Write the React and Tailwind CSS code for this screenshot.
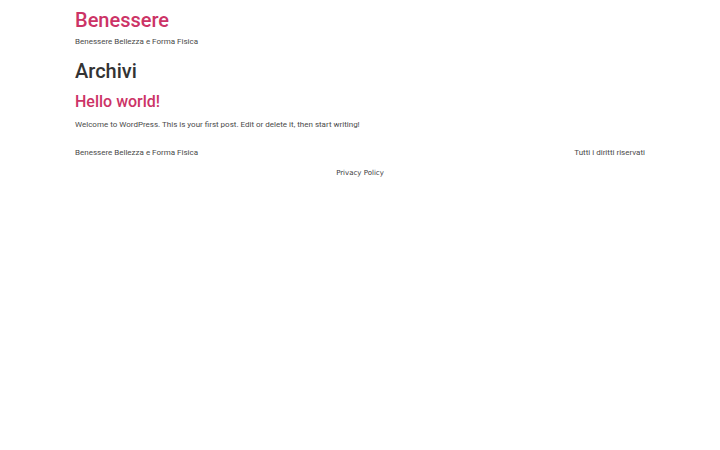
export default function App() {
  return (
    <div className="min-h-[450px] w-[720px] bg-white text-[#333333]" style={{ fontFamily: "Roboto, 'Liberation Sans', sans-serif" }}>
      <div className="mx-auto w-[570px] pt-[8px]">
        <header>
          <div className="text-[20px] leading-[24px] font-medium text-[#cc3366]">Benessere</div>
          <div className="mt-[4px] text-[8px] leading-[12px] text-[#4a4a4a]">Benessere Bellezza e Forma Fisica</div>
        </header>
        <main>
          <h1 className="mt-[11px] text-[20px] leading-[24px] font-medium">Archivi</h1>
          <h2 className="mt-[9px] text-[16px] leading-[20px] font-medium text-[#cc3366]">Hello world!</h2>
          <p className="mt-[7px] text-[8px] leading-[12px] text-[#4a4a4a]">Welcome to WordPress. This is your first post. Edit or delete it, then start writing!</p>
        </main>
        <footer>
          <div className="mt-[16px] flex justify-between text-[8px] leading-[12px] text-[#4a4a4a]">
            <span>Benessere Bellezza e Forma Fisica</span>
            <span>Tutti i diritti riservati</span>
          </div>
          <div className="mt-[9px] text-center text-[7px] leading-[10px] text-[#3a3a3a]" style={{ fontFamily: "'DejaVu Sans', sans-serif" }}>
            Privacy Policy
          </div>
        </footer>
      </div>
    </div>
  );
}
